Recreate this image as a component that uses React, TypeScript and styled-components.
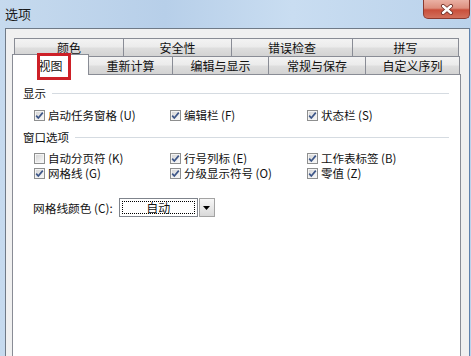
import React from 'react';
import styled, { createGlobalStyle } from 'styled-components';

const GlobalStyle = createGlobalStyle`
  html, body {
    margin: 0;
    padding: 0;
    background: #fff;
  }
  body {
    font-family: "Noto Sans CJK SC", "Liberation Sans", sans-serif;
    color: #000;
  }
`;

const Window = styled.div`
  width: 471px;
  height: 356px;
  box-sizing: border-box;
  overflow: hidden;
  display: flex;
  flex-direction: column;
  padding: 0 1px 0 5px;
  background: linear-gradient(90deg, #c6daee 0%, #b7cfe9 35%, #c9ddf1 62%, #bad2eb 100%);
`;

const TitleBar = styled.div`
  height: 28px;
  display: flex;
  justify-content: space-between;
  align-items: flex-start;
  flex-shrink: 0;
`;

const Title = styled.span`
  font-size: 13px;
  line-height: 28px;
  color: #1a1a1a;
`;

const CloseButton = styled.div`
  width: 47px;
  height: 19px;
  box-sizing: border-box;
  border: 1px solid #8a3a30;
  border-top: none;
  border-radius: 0 0 5px 5px;
  background: linear-gradient(#eab1a4 0%, #dd8f7e 45%, #c94f3b 55%, #d2705c 100%);
  display: flex;
  align-items: center;
  justify-content: center;
`;

const Client = styled.div`
  flex: 1;
  display: flex;
  flex-direction: column;
  background: #f0f0f0;
  border: 1px solid #6f7a87;
  border-right-color: #5f82ad;
  border-bottom: none;
  padding-top: 9px;
`;

const TabStrip = styled.div`
  display: flex;
  flex-direction: column;
  margin: 0 8px 0 6px;
`;

const TabRow = styled.div<{ $inset: number; $lift?: number }>`
  display: flex;
  align-items: flex-end;
  padding-left: ${p => p.$inset}px;
  margin-top: ${p => -(p.$lift || 0)}px;
`;

const Tab = styled.div<{ $w: number; $active?: boolean }>`
  position: relative;
  width: ${p => p.$w}px;
  height: ${p => (p.$active ? 21 : 18)}px;
  box-sizing: border-box;
  flex-shrink: 0;
  border: 1px solid #898c95;
  border-bottom: none;
  margin-left: -1px;
  margin-bottom: ${p => (p.$active ? -1 : 0)}px;
  padding-top: ${p => (p.$active ? 2 : 0)}px;
  z-index: ${p => (p.$active ? 2 : 1)};
  background: ${p =>
    p.$active ? '#ffffff' : 'linear-gradient(#f3f3f3 0%, #ebebeb 48%, #dedede 52%, #d3d3d3 100%)'};
  font-size: 12px;
  line-height: 17px;
  text-align: center;
  color: #111;
  &:first-child {
    margin-left: 0;
  }
`;

const Highlight = styled.div`
  position: absolute;
  left: 24px;
  top: -2px;
  width: 34px;
  height: 27px;
  box-sizing: border-box;
  border: 3px solid #cd2027;
`;

const Panel = styled.div`
  flex: none;
  height: 330px;
  margin: 0 8px 0 6px;
  padding: 0 11px 0 10px;
  border: 1px solid #898c95;
  background: #fff;
  font-size: 11.5px;
  color: #111;
`;

const GroupHeader = styled.div<{ $gap: number }>`
  display: flex;
  align-items: center;
  gap: 6px;
  height: 14px;
  line-height: 14px;
  margin-top: ${p => p.$gap}px;
  &::after {
    content: '';
    flex: 1;
    height: 1px;
    background: #d5dbe1;
  }
`;

const OptionGrid = styled.div<{ $gap: number }>`
  display: grid;
  grid-template-columns: 136px 137px auto;
  grid-auto-rows: 15px;
  margin: ${p => p.$gap}px 0 0 11px;
`;

const Option = styled.label`
  display: flex;
  align-items: center;
  gap: 3px;
  white-space: nowrap;
  line-height: 15px;
`;

const ColorRow = styled.div`
  display: flex;
  align-items: center;
  gap: 6px;
  margin: 17px 0 0 10px;
  font-size: 11.7px;
`;

const Combo = styled.div`
  display: flex;
  gap: 1px;
  height: 19px;
`;

const ComboField = styled.div`
  width: 79px;
  box-sizing: border-box;
  border: 1px solid #7f848c;
  padding: 2px;
  background: #fff;
`;

const FocusBox = styled.div`
  height: 100%;
  box-sizing: border-box;
  border: 1px dotted #000;
  font-size: 12px;
  line-height: 11px;
  text-align: center;
`;

const ComboButton = styled.div`
  width: 16px;
  box-sizing: border-box;
  border: 1px solid #a3a3a3;
  background: linear-gradient(#f7f7f7, #d9d9d9);
  display: flex;
  align-items: center;
  justify-content: center;
`;

const CheckBox = ({ checked }: { checked: boolean }) => (
  <svg width="11" height="11" viewBox="0 0 11 11">
    <defs>
      <linearGradient id="cbfill" x1="0" y1="0" x2="1" y2="1">
        <stop offset="0" stopColor="#d6d6d6" />
        <stop offset="1" stopColor="#f7f7f7" />
      </linearGradient>
    </defs>
    <rect x="0.5" y="0.5" width="10" height="10" fill="#f4f4f4" stroke="#8e8f8f" />
    <rect x="2" y="2" width="7" height="7" fill="url(#cbfill)" />
    {checked && (
      <path d="M2.2 5.6 L4.3 8 L8.8 2.6" fill="none" stroke="#3d5688" strokeWidth="1.7" />
    )}
  </svg>
);

type Opt = { label: string; checked: boolean };

const showOptions: Opt[] = [
  { label: '启动任务窗格 (U)', checked: true },
  { label: '编辑栏 (F)', checked: true },
  { label: '状态栏 (S)', checked: true },
];

const windowOptions: Opt[] = [
  { label: '自动分页符 (K)', checked: false },
  { label: '行号列标 (E)', checked: true },
  { label: '工作表标签 (B)', checked: true },
  { label: '网格线 (G)', checked: true },
  { label: '分级显示符号 (O)', checked: true },
  { label: '零值 (Z)', checked: true },
];

const backTabs = [
  { label: '颜色', w: 110 },
  { label: '安全性', w: 109 },
  { label: '错误检查', w: 122 },
  { label: '拼写', w: 107 },
];

const frontTabs = [
  { label: '视图', w: 77, active: true },
  { label: '重新计算', w: 85 },
  { label: '编辑与显示', w: 97 },
  { label: '常规与保存', w: 98 },
  { label: '自定义序列', w: 95 },
];

export default function App() {
  return (
    <>
      <GlobalStyle />
      <Window>
        <TitleBar>
          <Title>选项</Title>
          <CloseButton>
            <svg width="14" height="11" viewBox="0 0 14 11">
              <path d="M3 2 L11 9 M11 2 L3 9" stroke="#6b2a22" strokeWidth="4" strokeLinecap="round" />
              <path d="M3 2 L11 9 M11 2 L3 9" stroke="#fff" strokeWidth="2.4" strokeLinecap="round" />
            </svg>
          </CloseButton>
        </TitleBar>
        <Client>
          <TabStrip>
            <TabRow $inset={2}>
              {backTabs.map(t => (
                <Tab key={t.label} $w={t.w}>
                  {t.label}
                </Tab>
              ))}
            </TabRow>
            <TabRow $inset={0} $lift={2}>
              {frontTabs.map(t => (
                <Tab key={t.label} $w={t.w} $active={t.active}>
                  {t.label}
                  {t.active && <Highlight />}
                </Tab>
              ))}
            </TabRow>
          </TabStrip>
          <Panel>
            <GroupHeader $gap={11}>显示</GroupHeader>
            <OptionGrid $gap={8}>
              {showOptions.map(o => (
                <Option key={o.label}>
                  <CheckBox checked={o.checked} />
                  {o.label}
                </Option>
              ))}
            </OptionGrid>
            <GroupHeader $gap={7}>窗口选项</GroupHeader>
            <OptionGrid $gap={7}>
              {windowOptions.map(o => (
                <Option key={o.label}>
                  <CheckBox checked={o.checked} />
                  {o.label}
                </Option>
              ))}
            </OptionGrid>
            <ColorRow>
              <span>网格线颜色 (C):</span>
              <Combo>
                <ComboField>
                  <FocusBox>自动</FocusBox>
                </ComboField>
                <ComboButton>
                  <svg width="7" height="4" viewBox="0 0 7 4">
                    <path d="M0 0 H7 L3.5 4 Z" fill="#000" />
                  </svg>
                </ComboButton>
              </Combo>
            </ColorRow>
          </Panel>
        </Client>
      </Window>
    </>
  );
}
